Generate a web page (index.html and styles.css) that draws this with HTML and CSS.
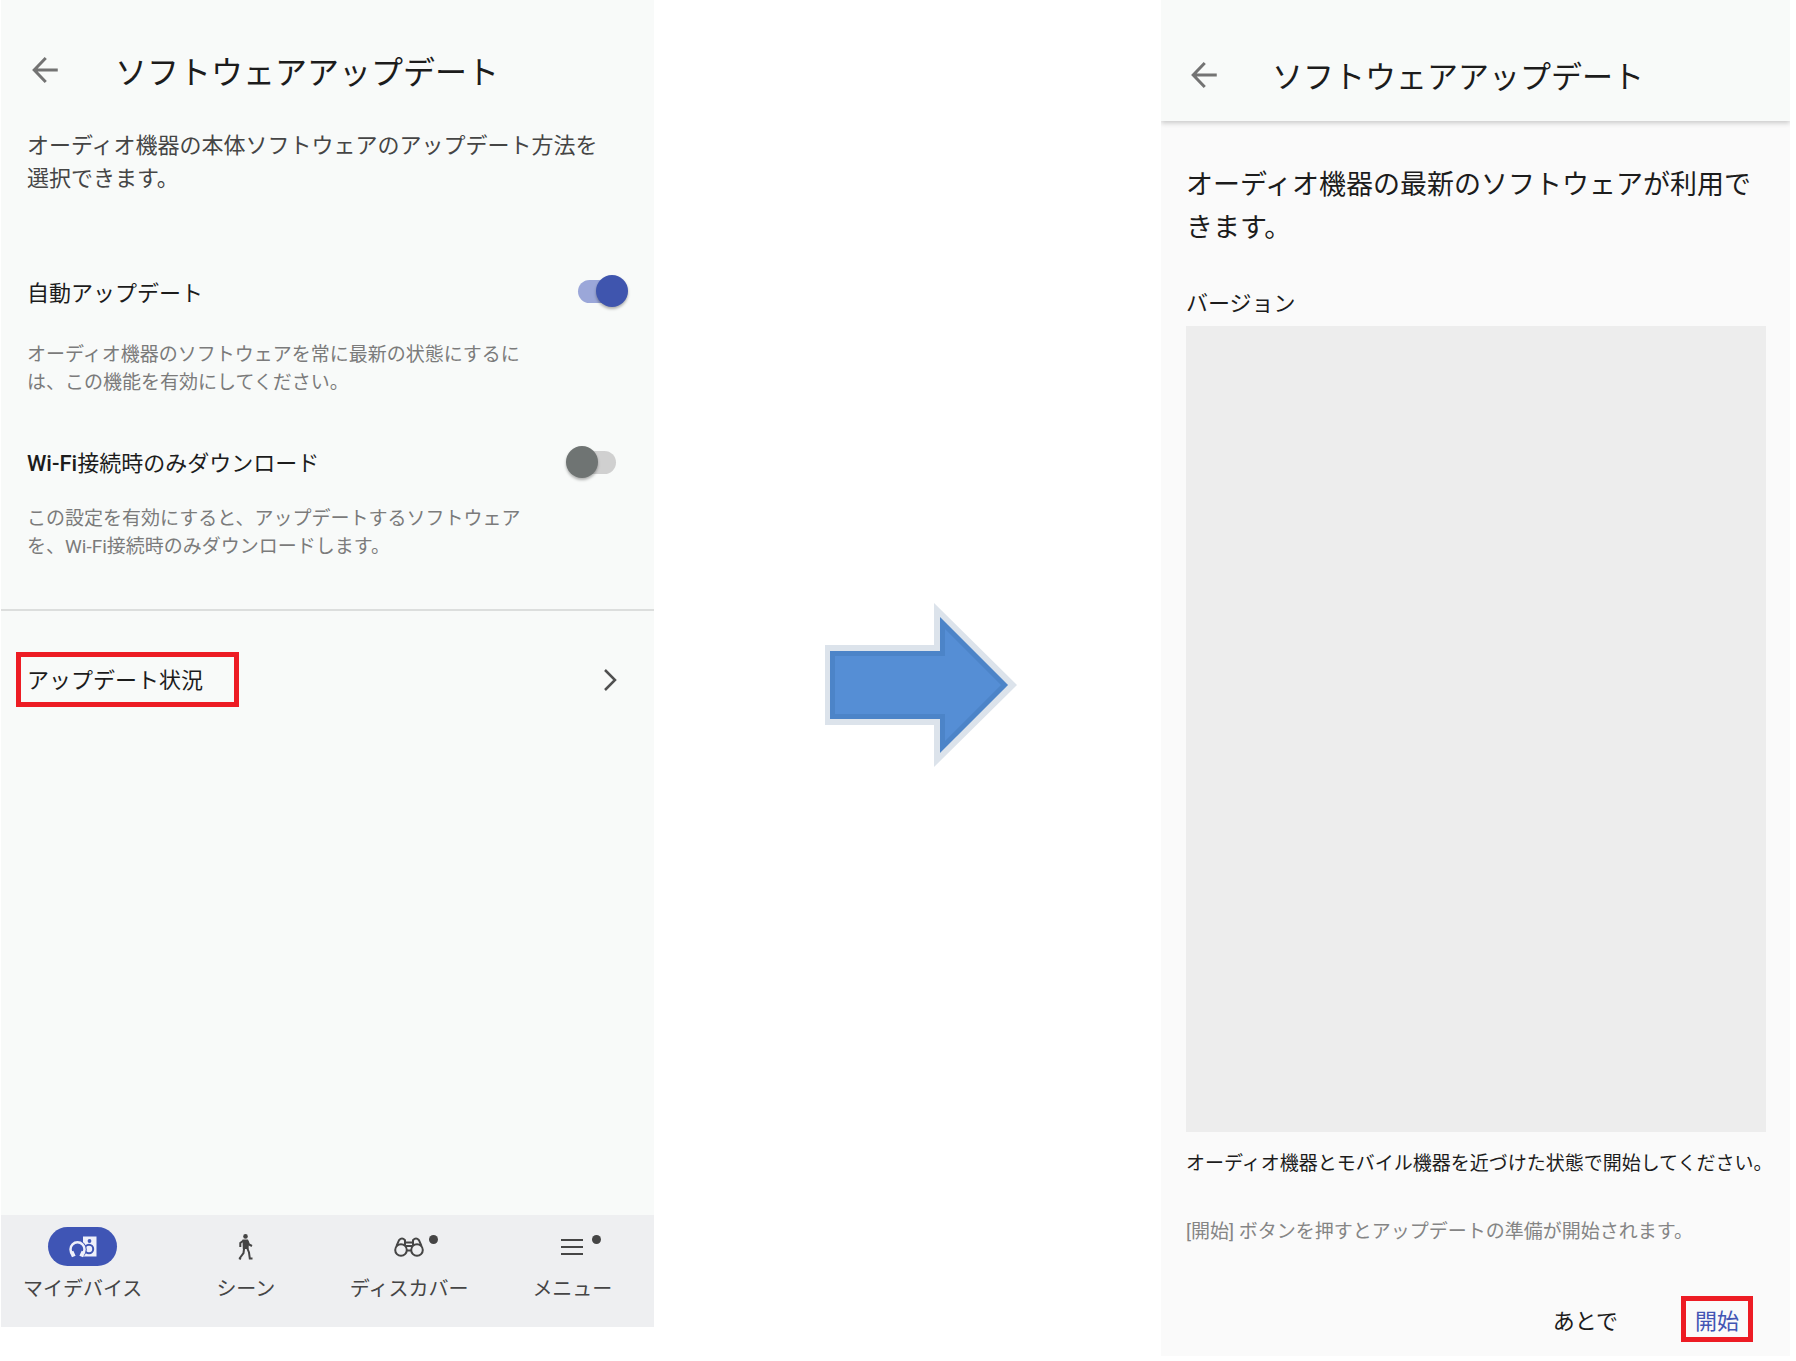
FILE: index.html
```
<!DOCTYPE html>
<html lang="ja">
  <head>
    <meta charset="utf-8">
    <title>ソフトウェアアップデート</title>
    <link rel="stylesheet" href="styles.css">
  </head>
  <body>
    <div class="steps">

      <!-- update settings -->
      <section class="screen settings">
        <header class="bar">
          <button class="back" type="button" aria-label="戻る">
            <svg viewBox="0 0 24 24"><path d="M20.500 12H5M12.500 4L4.800 12l7.700 8"/></svg>
          </button>
          <h1>ソフトウェアアップデート</h1>
        </header>
        <div class="options">
          <p class="intro">オーディオ機器の本体ソフトウェアのアップデート方法を選択できます。</p>
          <div class="option">
            <label for="auto">自動アップデート</label>
            <input class="switch" id="auto" type="checkbox" checked>
          </div>
          <p class="hint">オーディオ機器のソフトウェアを常に最新の状態にするには、この機能を有効にしてください。</p>
          <div class="option second">
            <label for="wifi"><b>Wi-Fi</b>接続時のみダウンロード</label>
            <input class="switch" id="wifi" type="checkbox">
          </div>
          <p class="hint">この設定を有効にすると、アップデートするソフトウェアを、Wi-Fi接続時のみダウンロードします。</p>
        </div>
        <a class="status" href="#update">
          <span class="marked">アップデート状況</span>
          <svg class="chevron" viewBox="0 0 14 22"><path d="M2 1l10 10L2 21"/></svg>
        </a>
        <nav class="tabs">
          <a class="tab" href="#device">
            <span class="icon pill">
              <svg viewBox="0 0 28 22">
                <path class="solid" d="M14 .500h13.500v20H14z"/>
                <circle class="cut" cx="20.500" cy="5" r="1.900"/>
                <circle class="cutline" cx="20" cy="13" r="4.200"/>
                <circle class="cut" cx="8.500" cy="13.500" r="9.300"/>
                <path class="light" d="M3.500 18.200A7 7 0 1 1 13.500 18.200"/>
                <path class="band" d="M2.500 15.500l2.300 5M14.500 15.500l-2.300 5"/>
              </svg>
            </span>
            マイデバイス
          </a>
          <a class="tab" href="#scene">
            <span class="icon">
              <svg class="walk" viewBox="0 0 16 26">
                <circle class="fill" cx="7.500" cy="2.400" r="2.300"/>
                <path class="fill" d="M4.500 5.500h5.500l1 4-.500 5.500H4.800z"/>
                <path d="M5.600 6.500L2.300 9v4M9.500 7l1.500 3.500 3 1.500"/>
                <path d="M6.200 13.500L5.500 19l-4 5.500M9 13.500l2 5 .800 6H14.500M1 24l2 1"/>
              </svg>
            </span>
            シーン
          </a>
          <a class="tab" href="#discover">
            <span class="icon dot">
              <svg viewBox="0 0 30 20">
                <circle cx="7" cy="13" r="5.800"/><circle cx="23" cy="13" r="5.800"/>
                <path d="M2.500 9L5 3.200Q8 0 11 3.200V8.500M27.500 9L25 3.200Q22 0 19 3.200V8.500M11 5.500h8M11.500 9h7M13 13.500h4"/>
              </svg>
            </span>
            ディスカバー
          </a>
          <a class="tab" href="#menu">
            <span class="icon dot">
              <svg viewBox="0 0 30 20"><path d="M4 3h22M4 10h22M4 17h22"/></svg>
            </span>
            メニュー
          </a>
        </nav>
      </section>

      <div class="next">
        <svg viewBox="0 0 192 164">
          <path class="edge" d="M0 42h109V0l83 82-83 82v-42H0z"/>
          <path class="body" d="M7.500 50.500h110V20l62 62-62 62v-30.500H7.500z"/>
        </svg>
      </div>

      <!-- update available -->
      <section class="screen update" id="update">
        <header class="bar raised">
          <button class="back" type="button" aria-label="戻る">
            <svg viewBox="0 0 24 24"><path d="M20.500 12H5M12.500 4L4.800 12l7.700 8"/></svg>
          </button>
          <h1>ソフトウェアアップデート</h1>
        </header>
        <div class="content">
          <h2>オーディオ機器の最新のソフトウェアが利用できます。</h2>
          <p class="version">バージョン</p>
          <div class="notes"></div>
          <p class="near">オーディオ機器とモバイル機器を近づけた状態で開始してください。</p>
          <p class="ready">[開始] ボタンを押すとアップデートの準備が開始されます。</p>
          <div class="actions">
            <button class="later" type="button">あとで</button>
            <button class="start" type="button">開始</button>
          </div>
        </div>
      </section>

    </div>
  </body>
</html>
```

FILE: styles.css
```
* {
  box-sizing: border-box;
}

body {
  margin: 0;
  background: white;
  color: #1c1c1c;
  font-family: "Noto Sans CJK JP", sans-serif;
  font-size: 22px;
}

h1, h2, p {
  margin: 0;
  font-weight: normal;
}

button {
  border: none;
  padding: 0;
  background: none;
  color: inherit;
  font: inherit;
}

a {
  color: inherit;
  text-decoration: none;
}

svg {
  display: block;
  fill: none;
}

.steps {
  display: grid;
  grid-template-columns: minmax(0, 653fr) minmax(0, 507fr) minmax(0, 629fr);
  min-height: 100vh;
  padding: 0 6px 0 1px;
}

.screen {
  display: flex;
  flex-direction: column;
  background: #f8faf9;
}

.settings {
  margin-bottom: 34px;
}

.update {
  margin-bottom: 5px;
  background: #fafafa;
}

/* title bar */
.bar {
  display: flex;
  align-items: center;
  gap: 52px;
  padding: 46px 26px 0;
}

.bar h1 {
  font-size: 32px;
  line-height: 48px;
  white-space: nowrap;
}

.raised {
  gap: 50px;
  padding: 51px 25px 22px;
  background: #f8faf9;
  box-shadow: 0 2px 5px rgba(0, 0, 0, 0.2);
  clip-path: inset(0 0 -10px 0);
}

.raised h1 {
  font-size: 31px;
}

.back svg {
  width: 36px;
  height: 36px;
  stroke: #737373;
  stroke-width: 2;
}

/* settings */
.options {
  padding: 33px 38px 48px 26px;
  border-bottom: 2px solid #dcdedd;
}

.intro {
  margin-bottom: 82px;
  color: #454545;
  line-height: 33px;
}

.option {
  display: flex;
  justify-content: space-between;
  align-items: center;
  line-height: 32px;
}

.option b {
  font-family: Roboto, sans-serif;
  font-weight: 500;
}

.second {
  margin-top: 48px;
}

.hint {
  max-width: 500px;
  margin-top: 34px;
  color: #7b7b7b;
  font-family: Roboto, "Noto Sans CJK JP", sans-serif;
  font-size: 19px;
  line-height: 28px;
}

.second + .hint {
  margin-top: 25px;
}

.switch {
  position: relative;
  appearance: none;
  width: 38px;
  height: 23px;
  margin: 0;
  border-radius: 12px;
  background: #d0d0d0;
}

.switch::before {
  content: "";
  position: absolute;
  top: -5px;
  left: -12px;
  width: 32px;
  height: 32px;
  border-radius: 50%;
  background: #6f7473;
  box-shadow: 0 2px 3px rgba(0, 0, 0, 0.3);
}

.switch:checked {
  background: #9ba7d9;
}

.switch:checked::before {
  left: 18px;
  background: #3f55ae;
}

.status {
  display: flex;
  justify-content: space-between;
  align-items: center;
  padding: 41px 37px 40px 15px;
}

.marked {
  padding: 5px 31px 8px 6px;
  border: 5px solid #ed1c24;
  line-height: 32px;
}

.chevron {
  width: 14px;
  height: 22px;
  stroke: #505050;
  stroke-width: 2.5;
}

/* bottom tabs */
.tabs {
  display: grid;
  grid-template-columns: repeat(4, 1fr);
  margin-top: auto;
  padding: 12px 0 24px;
  background: #eeeff1;
}

.tab {
  display: flex;
  flex-direction: column;
  align-items: center;
  gap: 7px;
  color: #454545;
  font-size: 20px;
  line-height: 30px;
}

.icon {
  position: relative;
  display: grid;
  place-items: center;
  width: 69px;
  height: 39px;
}

.icon svg {
  width: 30px;
  height: 20px;
  stroke: #454545;
  stroke-width: 2;
}

.icon .walk {
  width: 16px;
  height: 26px;
}

.walk .fill {
  fill: #454545;
  stroke: none;
}

.pill {
  border-radius: 20px;
  background: #3f55b5;
}

.pill svg {
  width: 28px;
  height: 22px;
}

.pill .solid {
  fill: #eef0fa;
  stroke: none;
}

.pill .cut {
  fill: #3f55b5;
  stroke: none;
}

.pill .cutline {
  stroke: #3f55b5;
}

.pill .light {
  stroke: #eef0fa;
  stroke-width: 2.5;
}

.pill .band {
  stroke: #eef0fa;
  stroke-width: 4;
}

.dot::after {
  content: "";
  position: absolute;
  top: 8px;
  right: 6px;
  width: 9px;
  height: 9px;
  border-radius: 50%;
  background: #454545;
}

/* arrow between the screens */
.next {
  display: grid;
  justify-items: center;
  align-items: center;
  padding: 8px 0 0 26px;
}

.next svg {
  width: 192px;
  height: 164px;
}

.edge {
  fill: #dce3eb;
}

.body {
  fill: #558ed5;
  stroke: #4c84c8;
  stroke-width: 5;
}

/* update available */
.content {
  display: flex;
  flex-direction: column;
  flex: 1;
  padding: 40px 24px 14px 25px;
}

.content h2 {
  margin-bottom: 40px;
  font-size: 27px;
  line-height: 43px;
}

.version {
  line-height: 28px;
}

.notes {
  flex: 1;
  margin: 11px 0 16px;
  background: #ededed;
}

.near, .ready {
  font-size: 19px;
  line-height: 28px;
  white-space: nowrap;
}

.ready {
  margin: 42px 0 50px;
  color: #858585;
  font-family: Roboto, "Noto Sans CJK JP", sans-serif;
}

.actions {
  display: flex;
  justify-content: flex-end;
  gap: 63px;
  padding-right: 13px;
}

.start {
  padding: 3px 9px;
  border: 5px solid #ed1c24;
  color: #4255b4;
  line-height: 30px;
}
```
